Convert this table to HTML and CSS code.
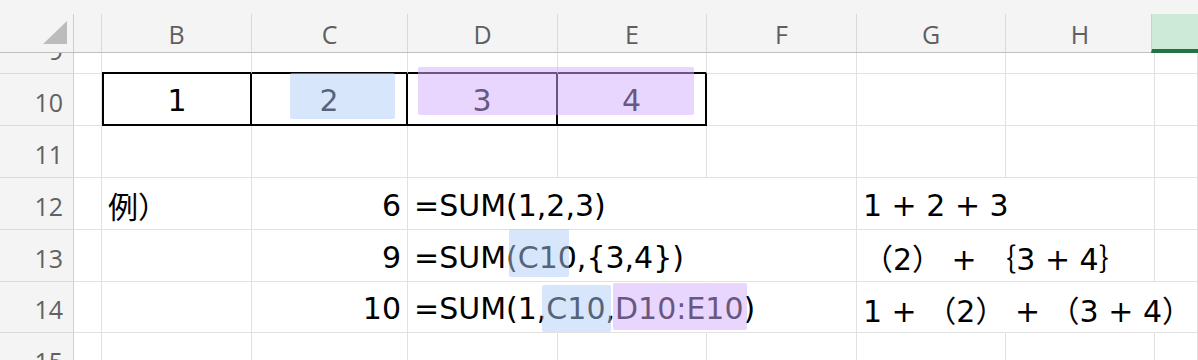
FILE: index.html
```html
<!DOCTYPE html>
<html lang="ja">
<head>
<meta charset="utf-8">
<title>SUM</title>
<link rel="stylesheet" href="styles.css">
</head>
<body>
<div class="sheet">
  <div class="colhead">
    <div class="corner">
      <svg class="tri" width="26" height="26" viewBox="0 0 26 26"><polygon points="24,0 24,23 0,23" fill="#bcbcbc"/></svg>
    </div>
    <div></div>
    <div>B</div>
    <div>C</div>
    <div>D</div>
    <div>E</div>
    <div>F</div>
    <div>G</div>
    <div>H</div>
    <div class="sel"></div>
  </div>
  <div class="body">
    <div class="grid">
      <!-- row 9 -->
      <div class="rh">9</div>
      <div class="c"></div>
      <div class="c boxt"></div>
      <div class="c boxt"></div>
      <div class="c boxt"></div>
      <div class="c boxt"></div>
      <div class="c"></div>
      <div class="c"></div>
      <div class="c"></div>
      <div class="c"></div>
      <!-- row 10 -->
      <div class="rh">10</div>
      <div class="c"></div>
      <div class="c box boxl ctr">1</div>
      <div class="c box ctr">2</div>
      <div class="c box ctr">3</div>
      <div class="c box ctr">4</div>
      <div class="c"></div>
      <div class="c"></div>
      <div class="c"></div>
      <div class="c"></div>
      <!-- row 11 -->
      <div class="rh">11</div>
      <div class="c"></div>
      <div class="c"></div>
      <div class="c"></div>
      <div class="c"></div>
      <div class="c"></div>
      <div class="c"></div>
      <div class="c"></div>
      <div class="c"></div>
      <div class="c"></div>
      <!-- row 12 -->
      <div class="rh">12</div>
      <div class="c"></div>
      <div class="c">例）</div>
      <div class="c num">6</div>
      <div class="c nr">=SUM(1,2,3)</div>
      <div class="c nr"></div>
      <div class="c"></div>
      <div class="c nr wide">1 + 2 + 3</div>
      <div class="c"></div>
      <div class="c"></div>
      <!-- row 13 -->
      <div class="rh">13</div>
      <div class="c"></div>
      <div class="c"></div>
      <div class="c num">9</div>
      <div class="c nr">=SUM(C10,{3,4})</div>
      <div class="c nr"></div>
      <div class="c"></div>
      <div class="c nr wide">（2） + ｛3 + 4｝</div>
      <div class="c"></div>
      <div class="c"></div>
      <!-- row 14 -->
      <div class="rh">14</div>
      <div class="c"></div>
      <div class="c"></div>
      <div class="c num">10</div>
      <div class="c nr">=SUM(1,C10,D10:E10)</div>
      <div class="c nr"></div>
      <div class="c"></div>
      <div class="c nr wide">1 + （2） + （3 + 4）</div>
      <div class="c nr"></div>
      <div class="c"></div>
      <!-- row 15 -->
      <div class="rh">15</div>
      <div class="c"></div>
      <div class="c"></div>
      <div class="c"></div>
      <div class="c"></div>
      <div class="c"></div>
      <div class="c"></div>
      <div class="c"></div>
      <div class="c"></div>
      <div class="c"></div>
    </div>
  </div>
  <div class="mark blue m1"></div>
  <div class="mark purple m2"></div>
  <div class="mark blue m3"></div>
  <div class="mark blue m4"></div>
  <div class="mark purple m5"></div>
</div>
</body>
</html>
```
FILE: styles.css
```css
html, body {
  margin: 0;
  padding: 0;
  background: #fff;
}

.sheet {
  --cols: 74px 28px 150px 156px 150px 149px 150px 149px 149px 1fr;
  position: relative;
  width: 1198px;
  height: 360px;
  overflow: hidden;
  background: #fff;
}

.colhead {
  display: grid;
  grid-template-columns: var(--cols);
  height: 53px;
  box-sizing: border-box;
  padding-top: 14px;
  background: #f4f4f4;
  border-bottom: 1px solid #bfbfbf;
}

.colhead > div {
  border-right: 1px solid #d9d9d9;
  display: flex;
  align-items: center;
  justify-content: center;
  font-family: "Open Sans", "Liberation Sans", sans-serif;
  font-size: 25px;
  color: #5f5f5f;
  padding-top: 2px;
  box-sizing: border-box;
}

.colhead .corner {
  position: relative;
  border-right-color: #cfcfcf;
}

.colhead .corner .tri {
  position: absolute;
  left: 43px;
  top: 7px;
}

.colhead .sel {
  background: #cde9d8;
  border-right: none;
  border-left: 1px solid #b9dcc6;
  border-bottom: 4px solid #217346;
  margin-left: -4px;
  margin-bottom: -1px;
}

.body {
  height: 307px;
  overflow: hidden;
}

.grid {
  display: grid;
  grid-template-columns: var(--cols);
  grid-template-rows: 52px 52px 52px 52px 52px 51px 52px;
  margin-top: -31px;
}

.rh {
  background: #f4f4f4;
  border-right: 1px solid #cfcfcf;
  border-bottom: 1px solid #dadada;
  display: flex;
  align-items: center;
  justify-content: flex-end;
  padding: 4px 10px 0 0;
  box-sizing: border-box;
  font-family: "Open Sans", "Liberation Sans", sans-serif;
  font-size: 25px;
  color: #616161;
}

.c {
  border-right: 1px solid #e1e1e1;
  border-bottom: 1px solid #e1e1e1;
  box-sizing: border-box;
  display: flex;
  align-items: center;
  padding: 3px 6px 0 6px;
  white-space: nowrap;
  min-width: 0;
  font-family: "DejaVu Sans", "Noto Sans CJK JP", sans-serif;
  font-size: 30px;
  color: #000;
}

.c.num { justify-content: flex-end; }
.c.ctr { justify-content: center; }
.c.nr { border-right-color: transparent; }
.c.wide { font-family: "DejaVu Sans", "Noto Sans CJK JP", sans-serif; }

.c.boxt { border-bottom: 2px solid #000; }
.c.box {
  border-right: 2px solid #000;
  border-bottom: 2px solid #000;
}
.c.boxl { border-left: 2px solid #000; }

.mark {
  position: absolute;
  border-radius: 2px;
}
.mark.blue { background: rgba(173, 204, 245, 0.49); }
.mark.purple { background: rgba(210, 174, 253, 0.5); }

.m1 { left: 290px; top: 73px; width: 105px; height: 46px; }
.m2 { left: 418px; top: 67px; width: 276px; height: 48px; }
.m3 { left: 509px; top: 229px; width: 60px; height: 48px; }
.m4 { left: 542px; top: 285px; width: 69px; height: 47px; }
.m5 { left: 613px; top: 283px; width: 134px; height: 47px; }
```
